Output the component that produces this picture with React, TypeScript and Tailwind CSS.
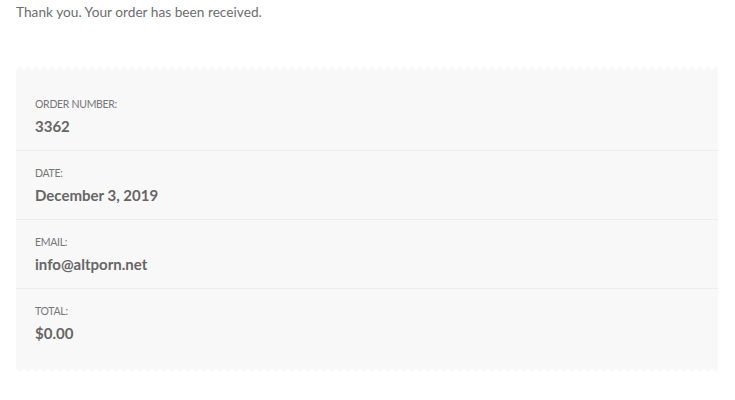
import React from "react";

function Zigzag({ flip }: { flip?: boolean }) {
  const id = flip ? "zzb" : "zzt";
  return (
    <svg className="block w-full h-[6px]" preserveAspectRatio="none">
      <defs>
        <pattern id={id} width="8" height="6" patternUnits="userSpaceOnUse">
          {flip ? (
            <polygon points="0,0 8,0 8,2 4,6 0,2" fill="#f8f8f8" />
          ) : (
            <polygon points="0,6 8,6 8,4 4,0 0,4" fill="#f8f8f8" />
          )}
        </pattern>
      </defs>
      <rect width="100%" height="6" fill={`url(#${id})`} />
    </svg>
  );
}

const rows = [
  { label: "Order number:", value: "3362" },
  { label: "Date:", value: "December 3, 2019" },
  { label: "Email:", value: "info@altporn.net" },
  { label: "Total:", value: "$0.00" },
];

export default function App() {
  return (
    <div className="w-[735px] h-[400px] bg-white text-[#6d6d6d]" style={{ fontFamily: "Lato, 'Open Sans', sans-serif" }}>
      <p className="pl-4 pt-[3px] text-[13.7px] leading-[18px]">Thank you. Your order has been received.</p>
      <div className="ml-4 w-[702px] mt-[45px]">
        <Zigzag />
        <ul className="bg-[#f8f8f8] pt-[10px] pb-[9px]">
          {rows.map((r, i) => (
            <li key={r.label} className={`px-[19px] pt-[12.5px] pb-[11.5px] ${i < rows.length - 1 ? "border-b border-[#ececec]" : ""}`}>
              <div className="uppercase text-[10.5px] leading-[18px] tracking-[-0.3px] text-[#777]">{r.label}</div>
              <div className="font-bold text-[15px] leading-[26px] text-[#666]">{r.value}</div>
            </li>
          ))}
        </ul>
        <Zigzag flip />
      </div>
    </div>
  );
}
